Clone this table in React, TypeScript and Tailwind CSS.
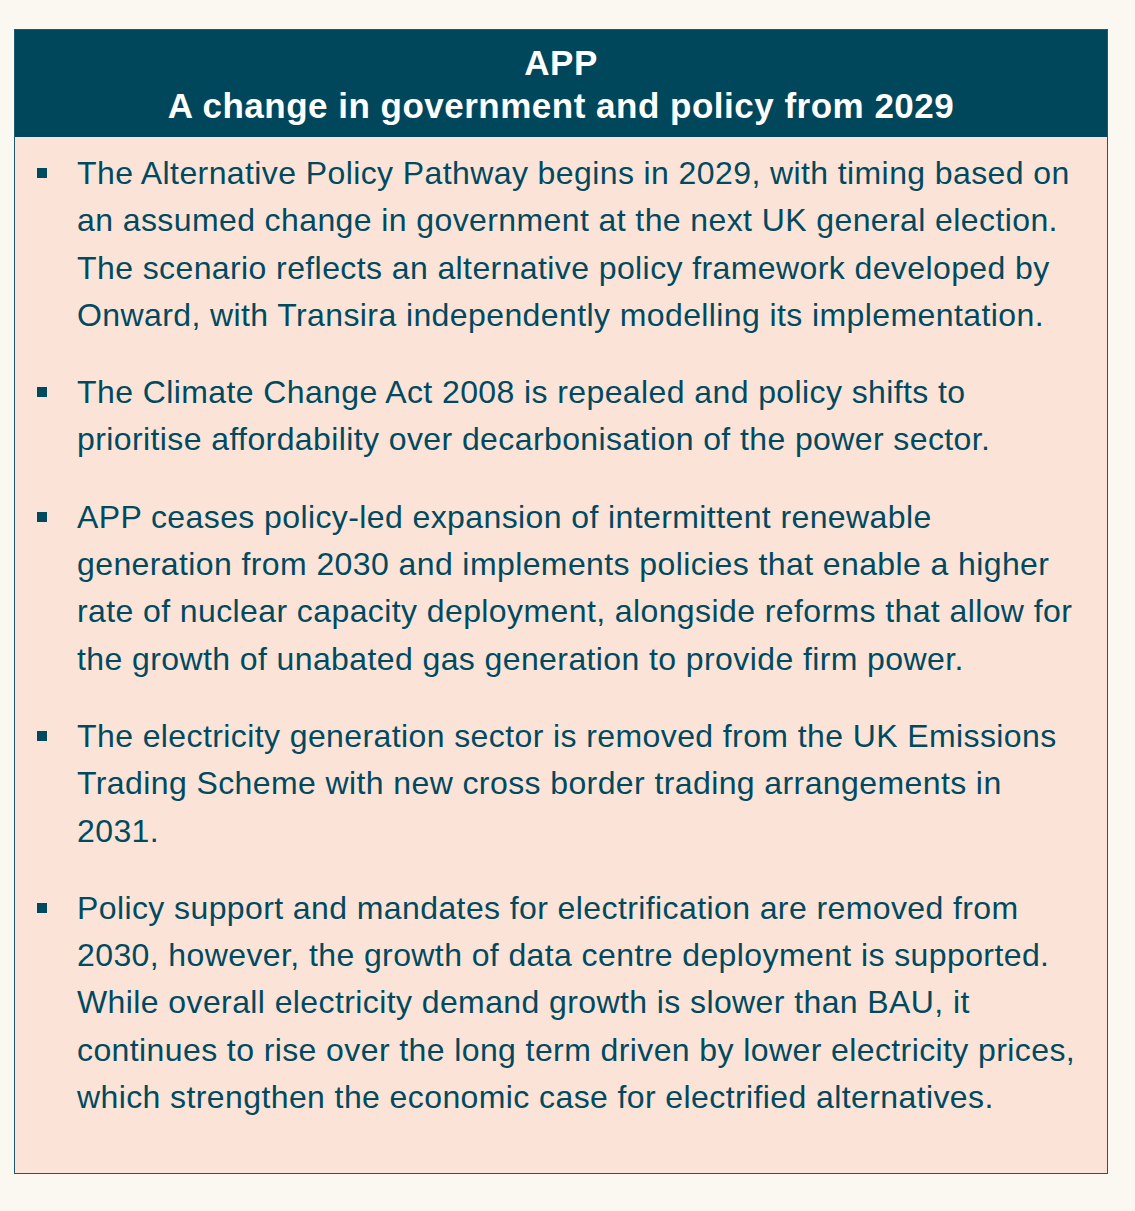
const bullets: string[][] = [
  [
    "The Alternative Policy Pathway begins in 2029, with timing based on",
    "an assumed change in government at the next UK general election.",
    "The scenario reflects an alternative policy framework developed by",
    "Onward, with Transira independently modelling its implementation.",
  ],
  [
    "The Climate Change Act 2008 is repealed and policy shifts to",
    "prioritise affordability over decarbonisation of the power sector.",
  ],
  [
    "APP ceases policy-led expansion of intermittent renewable",
    "generation from 2030 and implements policies that enable a higher",
    "rate of nuclear capacity deployment, alongside reforms that allow for",
    "the growth of unabated gas generation to provide firm power.",
  ],
  [
    "The electricity generation sector is removed from the UK Emissions",
    "Trading Scheme with new cross border trading arrangements in",
    "2031.",
  ],
  [
    "Policy support and mandates for electrification are removed from",
    "2030, however, the growth of data centre deployment is supported.",
    "While overall electricity demand growth is slower than BAU, it",
    "continues to rise over the long term driven by lower electricity prices,",
    "which strengthen the economic case for electrified alternatives.",
  ],
];

export default function App() {
  return (
    <div
      className="min-h-[1211px] w-[1135px] bg-[#fbf8f1] pl-[14px] pt-[29px]"
      style={{ fontFamily: '"Liberation Sans", Arial, sans-serif' }}
    >
      <div className="flex h-[1145px] w-[1094px] flex-col border-[1.5px] border-[#1d5a6e] bg-[#fce3d8]">
        <div className="flex h-[107px] flex-col items-center justify-center bg-[#00475c] text-[35px] font-bold leading-[43px] tracking-[0.5px] text-white">
          <div>APP</div>
          <div>A change in government and policy from 2029</div>
        </div>
        <div className="flex flex-col gap-[30px] pt-[13px] text-[#004a5f]">
          {bullets.map((lines, i) => (
            <div key={i} className="flex">
              <div className="w-[62px] shrink-0 pt-[18px] pl-[22px]">
                <div className="h-[10px] w-[10px] bg-[#004a5f]" />
              </div>
              <div className="text-[32px] leading-[47.3px] tracking-[0.4px] whitespace-nowrap">
                {lines.map((l, j) => (
                  <div key={j}>{l}</div>
                ))}
              </div>
            </div>
          ))}
        </div>
      </div>
    </div>
  );
}
